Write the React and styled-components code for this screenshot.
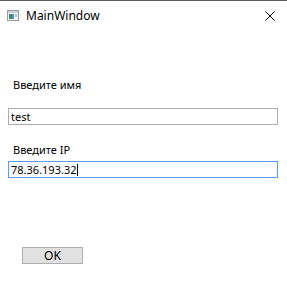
import React from 'react';
import styled, { createGlobalStyle } from 'styled-components';

const GlobalStyle = createGlobalStyle`
  html, body {
    margin: 0;
    padding: 0;
    background: #ffffff;
  }
  body {
    font-family: "Segoe UI", "Noto Sans", "Liberation Sans", sans-serif;
    font-size: 11px;
    color: #000000;
  }
`;

const Window = styled.div`
  width: 287px;
  height: 294px;
  box-sizing: border-box;
  border-top: 1px solid #5c5c5c;
  background: #ffffff;
  display: flex;
  flex-direction: column;
`;

const TitleBar = styled.div`
  height: 29px;
  display: flex;
  align-items: center;
  padding-left: 7px;
`;

const Title = styled.span`
  margin-left: 7px;
  font-size: 12px;
  flex: 1;
`;

const CloseButton = styled.div`
  width: 34px;
  height: 29px;
  display: flex;
  align-items: center;
  justify-content: center;
`;

const Content = styled.div`
  display: flex;
  flex-direction: column;
  padding: 0 9px 0 8px;
`;

const Label = styled.div`
  padding-left: 5px;
  margin-top: ${(p) => p.$top}px;
  height: 16px;
  line-height: 16px;
`;

const TextBox = styled.div`
  margin-top: ${(p) => p.$top}px;
  height: 17px;
  box-sizing: border-box;
  border: 1px solid ${(p) => (p.$focused ? '#569de5' : '#abadb3')};
  padding-left: 2px;
  line-height: 15px;
  display: flex;
  align-items: center;
`;

const Caret = styled.span`
  display: inline-block;
  width: 1px;
  height: 12px;
  background: #000000;
  margin-left: 1px;
`;

const OkButton = styled.div`
  margin: 69px 0 0 14px;
  width: 61px;
  height: 17px;
  box-sizing: border-box;
  background: #e1e1e1;
  border: 1px solid #adadad;
  display: flex;
  align-items: center;
  justify-content: center;
  font-size: 12px;
`;

const WindowIcon = () => (
  <svg width="12" height="11" viewBox="0 0 12 11">
    <rect x="0.5" y="0.5" width="11" height="10" fill="#f4f4f4" stroke="#9a9a9a" />
    <rect x="1" y="1" width="10" height="2" fill="#c8d4e0" />
    <rect x="2" y="4" width="3" height="5" fill="#3d8f6a" />
    <rect x="5" y="4" width="2" height="5" fill="#5a8ccc" />
    <rect x="8" y="4" width="2" height="3" fill="#a8c8e8" />
  </svg>
);

const CloseIcon = () => (
  <svg width="10" height="10" viewBox="0 0 10 10">
    <path d="M0.5 0.5 L9.5 9.5 M9.5 0.5 L0.5 9.5" stroke="#000" strokeWidth="1" />
  </svg>
);

export default function App() {
  return (
    <>
      <GlobalStyle />
      <Window>
        <TitleBar>
          <WindowIcon />
          <Title>MainWindow</Title>
          <CloseButton>
            <CloseIcon />
          </CloseButton>
        </TitleBar>
        <Content>
          <Label $top={47}>Введите имя</Label>
          <TextBox $top={15}>test</TextBox>
          <Label $top={17}>Введите IP</Label>
          <TextBox $top={3} $focused>
            78.36.193.32
            <Caret />
          </TextBox>
          <OkButton>OK</OkButton>
        </Content>
      </Window>
    </>
  );
}
